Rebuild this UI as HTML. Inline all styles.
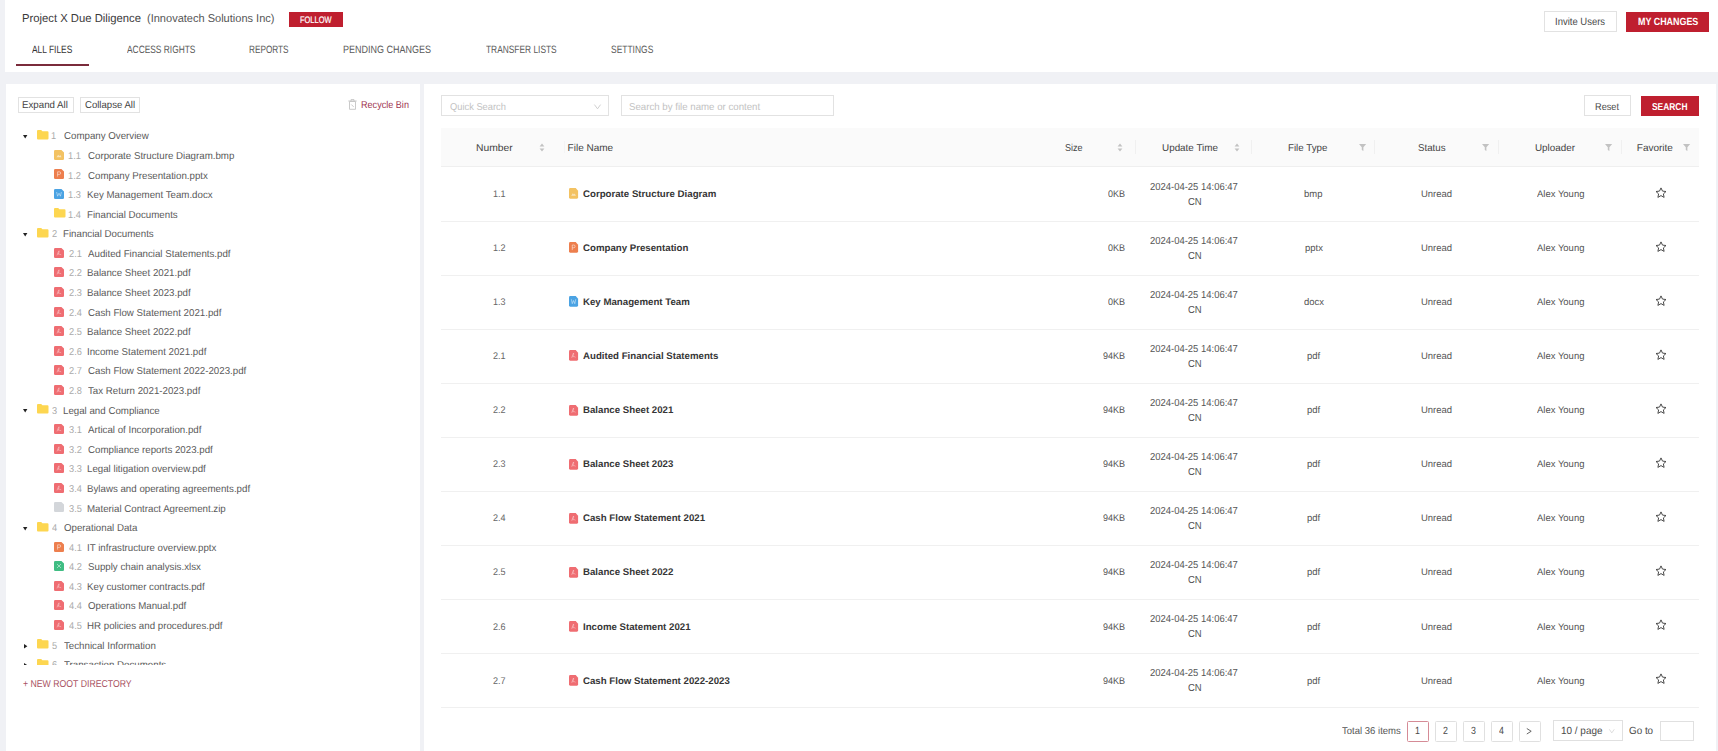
<!DOCTYPE html>
<html><head><meta charset="utf-8"><title>Project X Due Diligence</title>
<style>
html,body{margin:0;padding:0;}
body{width:1718px;height:751px;overflow:hidden;position:relative;background:#f0f1f5;font-family:"Liberation Sans",sans-serif;text-rendering:geometricPrecision;}
.t{position:absolute;line-height:1;white-space:nowrap;transform-origin:0 0;}
.b{position:absolute;}
.clip{position:absolute;overflow:hidden;}
svg.b{display:block;overflow:visible;}
</style></head><body>
<div class="b" style="left:5.00px;top:0.00px;width:1713.00px;height:72.00px;background:#fff;"></div>
<div class="b" style="left:6.00px;top:84.00px;width:414.00px;height:667.00px;background:#fff;"></div>
<div class="b" style="left:423.50px;top:84.00px;width:1292.50px;height:667.00px;background:#fff;"></div>
<div class="t" style="left:21.73px;top:13.00px;font-size:11.6px;color:#3a3a3a;transform:scaleX(0.9719);">Project X Due Diligence</div>
<div class="t" style="left:147.20px;top:14.00px;font-size:11.4px;color:#555;transform:scaleX(0.9679);">(Innovatech Solutions Inc)</div>
<div class="b" style="left:289.00px;top:11.80px;width:54.30px;height:14.90px;background:#bf1f2f;"></div>
<div class="t" style="left:300.10px;top:15.00px;font-size:9.4px;color:#fff;transform:scaleX(0.7950);-webkit-text-stroke:0.2px #fff;">FOLLOW</div>
<div class="t" style="left:32.30px;top:45.00px;font-size:10.6px;color:#333;transform:scaleX(0.7922);">ALL FILES</div>
<div class="t" style="left:127.20px;top:45.00px;font-size:10.6px;color:#5a5a5a;transform:scaleX(0.7907);">ACCESS RIGHTS</div>
<div class="t" style="left:249.02px;top:45.00px;font-size:10.6px;color:#5a5a5a;transform:scaleX(0.7760);">REPORTS</div>
<div class="t" style="left:343.05px;top:45.00px;font-size:10.6px;color:#5a5a5a;transform:scaleX(0.8500);">PENDING CHANGES</div>
<div class="t" style="left:485.70px;top:45.00px;font-size:10.6px;color:#5a5a5a;transform:scaleX(0.7899);">TRANSFER LISTS</div>
<div class="t" style="left:610.70px;top:45.00px;font-size:10.6px;color:#5a5a5a;transform:scaleX(0.7981);">SETTINGS</div>
<div class="b" style="left:16.00px;top:64.00px;width:73.00px;height:2.00px;background:#7a2b3b;"></div>
<div class="b" style="left:1543.60px;top:11.30px;width:73.10px;height:21.10px;background:#fff;border:1px solid #e2e2e2;box-sizing:border-box;"></div>
<div class="t" style="left:1554.59px;top:18.00px;font-size:10.4px;color:#4a4a4a;transform:scaleX(0.9130);">Invite Users</div>
<div class="b" style="left:1626.00px;top:11.90px;width:82.90px;height:19.90px;background:#bf1f2f;"></div>
<div class="t" style="left:1637.90px;top:18.00px;font-size:10.4px;color:#fff;font-weight:700;transform:scaleX(0.8586);">MY CHANGES</div>
<div class="b" style="left:17.50px;top:96.50px;width:56.20px;height:16.20px;border:1px solid #e2e2e2;box-sizing:border-box;"></div>
<div class="t" style="left:22.33px;top:101.00px;font-size:10px;color:#444;transform:scaleX(0.9717);">Expand All</div>
<div class="b" style="left:80.10px;top:96.50px;width:60.40px;height:16.20px;border:1px solid #e2e2e2;box-sizing:border-box;"></div>
<div class="t" style="left:85.40px;top:101.00px;font-size:10px;color:#444;transform:scaleX(0.9577);">Collapse All</div>
<svg class="b" style="left:348px;top:99px" width="9" height="11" viewBox="0 0 9 11"><path d="M1.5 2.5h6v7.8h-6z M0.3 2h8.4 M3 2V0.6h3V2 M3.3 5.5l2.4 2.4" fill="none" stroke="#c4c4c4" stroke-width="0.9"/></svg>
<div class="t" style="left:360.79px;top:101.00px;font-size:10px;color:#a03550;transform:scaleX(0.9077);">Recycle Bin</div>
<div class="clip" style="left:6px;top:120px;width:414px;height:544.6px;">
<div class="b" style="left:-6px;top:-120px;width:1718px;height:751px;">
<svg class="b" style="left:23.4px;top:135.10px" width="4.4" height="3.6" viewBox="0 0 4.4 3.6"><path d="M0 0H4.4L2.2 3.4Z" fill="#222"/></svg>
<svg class="b" style="left:36.60px;top:129.90px" width="11.5" height="9.5" viewBox="0 0 11.5 9.5"><path d="M0 1Q0 0 1 0H4.2L5.4 1.3H10.5Q11.5 1.3 11.5 2.3V8.5Q11.5 9.5 10.5 9.5H1Q0 9.5 0 8.5Z" fill="#fdd650"/></svg>
<div class="t" style="left:51.38px;top:132.00px;font-size:10px;color:#aaa;transform:scaleX(0.9231);">1</div>
<div class="t" style="left:64.00px;top:132.00px;font-size:10px;color:#5a5a5a;transform:scaleX(0.9715);">Company Overview</div>
<svg class="b" style="left:54.20px;top:149.88px" width="10" height="10" viewBox="0 0 10 10" preserveAspectRatio="none"><path d="M1.3 0H7.4L10 2.6V8.7Q10 10 8.7 10H1.3Q0 10 0 8.7V1.3Q0 0 1.3 0Z" fill="#f3c262"/><path d="M2.4 7.2L4.2 4.8L5.4 6.1L6.3 5.1L7.6 7.2Z" fill="#fff" opacity="0.55"/></svg>
<div class="t" style="left:67.88px;top:152.00px;font-size:10px;color:#aaa;transform:scaleX(0.9231);">1.1</div>
<div class="t" style="left:87.90px;top:152.00px;font-size:10px;color:#5a5a5a;transform:scaleX(0.9715);">Corporate Structure Diagram.bmp</div>
<svg class="b" style="left:54.20px;top:169.47px" width="10" height="10" viewBox="0 0 10 10" preserveAspectRatio="none"><path d="M1.3 0H7.4L10 2.6V8.7Q10 10 8.7 10H1.3Q0 10 0 8.7V1.3Q0 0 1.3 0Z" fill="#ed7f4e"/><path d="M3.6 7.6V2.8H5.3Q6.7 2.8 6.7 4.1Q6.7 5.4 5.3 5.4H3.6" fill="none" stroke="#fff" stroke-width="0.9" opacity="0.55"/></svg>
<div class="t" style="left:67.88px;top:172.00px;font-size:10px;color:#aaa;transform:scaleX(0.9231);">1.2</div>
<div class="t" style="left:87.90px;top:172.00px;font-size:10px;color:#5a5a5a;transform:scaleX(0.9715);">Company Presentation.pptx</div>
<svg class="b" style="left:54.20px;top:189.05px" width="10" height="10" viewBox="0 0 10 10" preserveAspectRatio="none"><path d="M1.3 0H7.4L10 2.6V8.7Q10 10 8.7 10H1.3Q0 10 0 8.7V1.3Q0 0 1.3 0Z" fill="#4ba3e3"/><path d="M2.6 3L3.6 7.2L5 4.2L6.4 7.2L7.4 3" fill="none" stroke="#fff" stroke-width="0.8" opacity="0.55"/></svg>
<div class="t" style="left:67.88px;top:191.00px;font-size:10px;color:#aaa;transform:scaleX(0.9231);">1.3</div>
<div class="t" style="left:86.93px;top:191.00px;font-size:10px;color:#5a5a5a;transform:scaleX(0.9715);">Key Management Team.docx</div>
<svg class="b" style="left:53.60px;top:208.24px" width="11.5" height="9.5" viewBox="0 0 11.5 9.5"><path d="M0 1Q0 0 1 0H4.2L5.4 1.3H10.5Q11.5 1.3 11.5 2.3V8.5Q11.5 9.5 10.5 9.5H1Q0 9.5 0 8.5Z" fill="#fdd650"/></svg>
<div class="t" style="left:67.88px;top:211.00px;font-size:10px;color:#aaa;transform:scaleX(0.9231);">1.4</div>
<div class="t" style="left:86.93px;top:211.00px;font-size:10px;color:#5a5a5a;transform:scaleX(0.9715);">Financial Documents</div>
<svg class="b" style="left:23.4px;top:233.03px" width="4.4" height="3.6" viewBox="0 0 4.4 3.6"><path d="M0 0H4.4L2.2 3.4Z" fill="#222"/></svg>
<svg class="b" style="left:36.60px;top:227.82px" width="11.5" height="9.5" viewBox="0 0 11.5 9.5"><path d="M0 1Q0 0 1 0H4.2L5.4 1.3H10.5Q11.5 1.3 11.5 2.3V8.5Q11.5 9.5 10.5 9.5H1Q0 9.5 0 8.5Z" fill="#fdd650"/></svg>
<div class="t" style="left:52.30px;top:230.00px;font-size:10px;color:#aaa;transform:scaleX(0.9231);">2</div>
<div class="t" style="left:63.03px;top:230.00px;font-size:10px;color:#5a5a5a;transform:scaleX(0.9715);">Financial Documents</div>
<svg class="b" style="left:54.20px;top:247.81px" width="10" height="10" viewBox="0 0 10 10" preserveAspectRatio="none"><path d="M1.3 0H7.4L10 2.6V8.7Q10 10 8.7 10H1.3Q0 10 0 8.7V1.3Q0 0 1.3 0Z" fill="#ef6d72"/><path d="M3 7.4Q4.4 3.2 5 2.8Q5.6 3.6 4.2 6.2Q6 6 7.2 6.8" fill="none" stroke="#fff" stroke-width="0.7" opacity="0.5"/></svg>
<div class="t" style="left:68.80px;top:250.00px;font-size:10px;color:#aaa;transform:scaleX(0.9231);">2.1</div>
<div class="t" style="left:87.90px;top:250.00px;font-size:10px;color:#5a5a5a;transform:scaleX(0.9715);">Audited Financial Statements.pdf</div>
<svg class="b" style="left:54.20px;top:267.39px" width="10" height="10" viewBox="0 0 10 10" preserveAspectRatio="none"><path d="M1.3 0H7.4L10 2.6V8.7Q10 10 8.7 10H1.3Q0 10 0 8.7V1.3Q0 0 1.3 0Z" fill="#ef6d72"/><path d="M3 7.4Q4.4 3.2 5 2.8Q5.6 3.6 4.2 6.2Q6 6 7.2 6.8" fill="none" stroke="#fff" stroke-width="0.7" opacity="0.5"/></svg>
<div class="t" style="left:68.80px;top:269.00px;font-size:10px;color:#aaa;transform:scaleX(0.9231);">2.2</div>
<div class="t" style="left:86.93px;top:269.00px;font-size:10px;color:#5a5a5a;transform:scaleX(0.9715);">Balance Sheet 2021.pdf</div>
<svg class="b" style="left:54.20px;top:286.98px" width="10" height="10" viewBox="0 0 10 10" preserveAspectRatio="none"><path d="M1.3 0H7.4L10 2.6V8.7Q10 10 8.7 10H1.3Q0 10 0 8.7V1.3Q0 0 1.3 0Z" fill="#ef6d72"/><path d="M3 7.4Q4.4 3.2 5 2.8Q5.6 3.6 4.2 6.2Q6 6 7.2 6.8" fill="none" stroke="#fff" stroke-width="0.7" opacity="0.5"/></svg>
<div class="t" style="left:68.80px;top:289.00px;font-size:10px;color:#aaa;transform:scaleX(0.9231);">2.3</div>
<div class="t" style="left:86.93px;top:289.00px;font-size:10px;color:#5a5a5a;transform:scaleX(0.9715);">Balance Sheet 2023.pdf</div>
<svg class="b" style="left:54.20px;top:306.57px" width="10" height="10" viewBox="0 0 10 10" preserveAspectRatio="none"><path d="M1.3 0H7.4L10 2.6V8.7Q10 10 8.7 10H1.3Q0 10 0 8.7V1.3Q0 0 1.3 0Z" fill="#ef6d72"/><path d="M3 7.4Q4.4 3.2 5 2.8Q5.6 3.6 4.2 6.2Q6 6 7.2 6.8" fill="none" stroke="#fff" stroke-width="0.7" opacity="0.5"/></svg>
<div class="t" style="left:68.80px;top:309.00px;font-size:10px;color:#aaa;transform:scaleX(0.9231);">2.4</div>
<div class="t" style="left:87.90px;top:309.00px;font-size:10px;color:#5a5a5a;transform:scaleX(0.9715);">Cash Flow Statement 2021.pdf</div>
<svg class="b" style="left:54.20px;top:326.15px" width="10" height="10" viewBox="0 0 10 10" preserveAspectRatio="none"><path d="M1.3 0H7.4L10 2.6V8.7Q10 10 8.7 10H1.3Q0 10 0 8.7V1.3Q0 0 1.3 0Z" fill="#ef6d72"/><path d="M3 7.4Q4.4 3.2 5 2.8Q5.6 3.6 4.2 6.2Q6 6 7.2 6.8" fill="none" stroke="#fff" stroke-width="0.7" opacity="0.5"/></svg>
<div class="t" style="left:68.80px;top:328.00px;font-size:10px;color:#aaa;transform:scaleX(0.9231);">2.5</div>
<div class="t" style="left:86.93px;top:328.00px;font-size:10px;color:#5a5a5a;transform:scaleX(0.9715);">Balance Sheet 2022.pdf</div>
<svg class="b" style="left:54.20px;top:345.74px" width="10" height="10" viewBox="0 0 10 10" preserveAspectRatio="none"><path d="M1.3 0H7.4L10 2.6V8.7Q10 10 8.7 10H1.3Q0 10 0 8.7V1.3Q0 0 1.3 0Z" fill="#ef6d72"/><path d="M3 7.4Q4.4 3.2 5 2.8Q5.6 3.6 4.2 6.2Q6 6 7.2 6.8" fill="none" stroke="#fff" stroke-width="0.7" opacity="0.5"/></svg>
<div class="t" style="left:68.80px;top:348.00px;font-size:10px;color:#aaa;transform:scaleX(0.9231);">2.6</div>
<div class="t" style="left:86.93px;top:348.00px;font-size:10px;color:#5a5a5a;transform:scaleX(0.9715);">Income Statement 2021.pdf</div>
<svg class="b" style="left:54.20px;top:365.32px" width="10" height="10" viewBox="0 0 10 10" preserveAspectRatio="none"><path d="M1.3 0H7.4L10 2.6V8.7Q10 10 8.7 10H1.3Q0 10 0 8.7V1.3Q0 0 1.3 0Z" fill="#ef6d72"/><path d="M3 7.4Q4.4 3.2 5 2.8Q5.6 3.6 4.2 6.2Q6 6 7.2 6.8" fill="none" stroke="#fff" stroke-width="0.7" opacity="0.5"/></svg>
<div class="t" style="left:68.80px;top:367.00px;font-size:10px;color:#aaa;transform:scaleX(0.9231);">2.7</div>
<div class="t" style="left:87.90px;top:367.00px;font-size:10px;color:#5a5a5a;transform:scaleX(0.9715);">Cash Flow Statement 2022-2023.pdf</div>
<svg class="b" style="left:54.20px;top:384.91px" width="10" height="10" viewBox="0 0 10 10" preserveAspectRatio="none"><path d="M1.3 0H7.4L10 2.6V8.7Q10 10 8.7 10H1.3Q0 10 0 8.7V1.3Q0 0 1.3 0Z" fill="#ef6d72"/><path d="M3 7.4Q4.4 3.2 5 2.8Q5.6 3.6 4.2 6.2Q6 6 7.2 6.8" fill="none" stroke="#fff" stroke-width="0.7" opacity="0.5"/></svg>
<div class="t" style="left:68.80px;top:387.00px;font-size:10px;color:#aaa;transform:scaleX(0.9231);">2.8</div>
<div class="t" style="left:87.90px;top:387.00px;font-size:10px;color:#5a5a5a;transform:scaleX(0.9715);">Tax Return 2021-2023.pdf</div>
<svg class="b" style="left:23.4px;top:409.29px" width="4.4" height="3.6" viewBox="0 0 4.4 3.6"><path d="M0 0H4.4L2.2 3.4Z" fill="#222"/></svg>
<svg class="b" style="left:36.60px;top:404.09px" width="11.5" height="9.5" viewBox="0 0 11.5 9.5"><path d="M0 1Q0 0 1 0H4.2L5.4 1.3H10.5Q11.5 1.3 11.5 2.3V8.5Q11.5 9.5 10.5 9.5H1Q0 9.5 0 8.5Z" fill="#fdd650"/></svg>
<div class="t" style="left:52.30px;top:407.00px;font-size:10px;color:#aaa;transform:scaleX(0.9231);">3</div>
<div class="t" style="left:63.03px;top:407.00px;font-size:10px;color:#5a5a5a;transform:scaleX(0.9715);">Legal and Compliance</div>
<svg class="b" style="left:54.20px;top:424.08px" width="10" height="10" viewBox="0 0 10 10" preserveAspectRatio="none"><path d="M1.3 0H7.4L10 2.6V8.7Q10 10 8.7 10H1.3Q0 10 0 8.7V1.3Q0 0 1.3 0Z" fill="#ef6d72"/><path d="M3 7.4Q4.4 3.2 5 2.8Q5.6 3.6 4.2 6.2Q6 6 7.2 6.8" fill="none" stroke="#fff" stroke-width="0.7" opacity="0.5"/></svg>
<div class="t" style="left:68.80px;top:426.00px;font-size:10px;color:#aaa;transform:scaleX(0.9231);">3.1</div>
<div class="t" style="left:87.90px;top:426.00px;font-size:10px;color:#5a5a5a;transform:scaleX(0.9715);">Artical of Incorporation.pdf</div>
<svg class="b" style="left:54.20px;top:443.66px" width="10" height="10" viewBox="0 0 10 10" preserveAspectRatio="none"><path d="M1.3 0H7.4L10 2.6V8.7Q10 10 8.7 10H1.3Q0 10 0 8.7V1.3Q0 0 1.3 0Z" fill="#ef6d72"/><path d="M3 7.4Q4.4 3.2 5 2.8Q5.6 3.6 4.2 6.2Q6 6 7.2 6.8" fill="none" stroke="#fff" stroke-width="0.7" opacity="0.5"/></svg>
<div class="t" style="left:68.80px;top:446.00px;font-size:10px;color:#aaa;transform:scaleX(0.9231);">3.2</div>
<div class="t" style="left:87.90px;top:446.00px;font-size:10px;color:#5a5a5a;transform:scaleX(0.9715);">Compliance reports 2023.pdf</div>
<svg class="b" style="left:54.20px;top:463.25px" width="10" height="10" viewBox="0 0 10 10" preserveAspectRatio="none"><path d="M1.3 0H7.4L10 2.6V8.7Q10 10 8.7 10H1.3Q0 10 0 8.7V1.3Q0 0 1.3 0Z" fill="#ef6d72"/><path d="M3 7.4Q4.4 3.2 5 2.8Q5.6 3.6 4.2 6.2Q6 6 7.2 6.8" fill="none" stroke="#fff" stroke-width="0.7" opacity="0.5"/></svg>
<div class="t" style="left:68.80px;top:465.00px;font-size:10px;color:#aaa;transform:scaleX(0.9231);">3.3</div>
<div class="t" style="left:86.93px;top:465.00px;font-size:10px;color:#5a5a5a;transform:scaleX(0.9715);">Legal litigation overview.pdf</div>
<svg class="b" style="left:54.20px;top:482.83px" width="10" height="10" viewBox="0 0 10 10" preserveAspectRatio="none"><path d="M1.3 0H7.4L10 2.6V8.7Q10 10 8.7 10H1.3Q0 10 0 8.7V1.3Q0 0 1.3 0Z" fill="#ef6d72"/><path d="M3 7.4Q4.4 3.2 5 2.8Q5.6 3.6 4.2 6.2Q6 6 7.2 6.8" fill="none" stroke="#fff" stroke-width="0.7" opacity="0.5"/></svg>
<div class="t" style="left:68.80px;top:485.00px;font-size:10px;color:#aaa;transform:scaleX(0.9231);">3.4</div>
<div class="t" style="left:86.93px;top:485.00px;font-size:10px;color:#5a5a5a;transform:scaleX(0.9715);">Bylaws and operating agreements.pdf</div>
<svg class="b" style="left:54.20px;top:502.42px" width="10" height="10" viewBox="0 0 10 10" preserveAspectRatio="none"><path d="M1.3 0H7.4L10 2.6V8.7Q10 10 8.7 10H1.3Q0 10 0 8.7V1.3Q0 0 1.3 0Z" fill="#d3d6da"/></svg>
<div class="t" style="left:68.80px;top:505.00px;font-size:10px;color:#aaa;transform:scaleX(0.9231);">3.5</div>
<div class="t" style="left:86.93px;top:505.00px;font-size:10px;color:#5a5a5a;transform:scaleX(0.9715);">Material Contract Agreement.zip</div>
<svg class="b" style="left:23.4px;top:526.80px" width="4.4" height="3.6" viewBox="0 0 4.4 3.6"><path d="M0 0H4.4L2.2 3.4Z" fill="#222"/></svg>
<svg class="b" style="left:36.60px;top:521.60px" width="11.5" height="9.5" viewBox="0 0 11.5 9.5"><path d="M0 1Q0 0 1 0H4.2L5.4 1.3H10.5Q11.5 1.3 11.5 2.3V8.5Q11.5 9.5 10.5 9.5H1Q0 9.5 0 8.5Z" fill="#fdd650"/></svg>
<div class="t" style="left:52.30px;top:524.00px;font-size:10px;color:#aaa;transform:scaleX(0.9231);">4</div>
<div class="t" style="left:64.00px;top:524.00px;font-size:10px;color:#5a5a5a;transform:scaleX(0.9715);">Operational Data</div>
<svg class="b" style="left:54.20px;top:541.59px" width="10" height="10" viewBox="0 0 10 10" preserveAspectRatio="none"><path d="M1.3 0H7.4L10 2.6V8.7Q10 10 8.7 10H1.3Q0 10 0 8.7V1.3Q0 0 1.3 0Z" fill="#ed7f4e"/><path d="M3.6 7.6V2.8H5.3Q6.7 2.8 6.7 4.1Q6.7 5.4 5.3 5.4H3.6" fill="none" stroke="#fff" stroke-width="0.9" opacity="0.55"/></svg>
<div class="t" style="left:68.80px;top:544.00px;font-size:10px;color:#aaa;transform:scaleX(0.9231);">4.1</div>
<div class="t" style="left:86.93px;top:544.00px;font-size:10px;color:#5a5a5a;transform:scaleX(0.9715);">IT infrastructure overview.pptx</div>
<svg class="b" style="left:54.20px;top:561.17px" width="10" height="10" viewBox="0 0 10 10" preserveAspectRatio="none"><path d="M1.3 0H7.4L10 2.6V8.7Q10 10 8.7 10H1.3Q0 10 0 8.7V1.3Q0 0 1.3 0Z" fill="#40bd83"/><path d="M3 3L7 7M7 3L3 7" fill="none" stroke="#fff" stroke-width="0.9" opacity="0.55"/></svg>
<div class="t" style="left:68.80px;top:563.00px;font-size:10px;color:#aaa;transform:scaleX(0.9231);">4.2</div>
<div class="t" style="left:87.90px;top:563.00px;font-size:10px;color:#5a5a5a;transform:scaleX(0.9715);">Supply chain analysis.xlsx</div>
<svg class="b" style="left:54.20px;top:580.75px" width="10" height="10" viewBox="0 0 10 10" preserveAspectRatio="none"><path d="M1.3 0H7.4L10 2.6V8.7Q10 10 8.7 10H1.3Q0 10 0 8.7V1.3Q0 0 1.3 0Z" fill="#ef6d72"/><path d="M3 7.4Q4.4 3.2 5 2.8Q5.6 3.6 4.2 6.2Q6 6 7.2 6.8" fill="none" stroke="#fff" stroke-width="0.7" opacity="0.5"/></svg>
<div class="t" style="left:68.80px;top:583.00px;font-size:10px;color:#aaa;transform:scaleX(0.9231);">4.3</div>
<div class="t" style="left:86.93px;top:583.00px;font-size:10px;color:#5a5a5a;transform:scaleX(0.9715);">Key customer contracts.pdf</div>
<svg class="b" style="left:54.20px;top:600.34px" width="10" height="10" viewBox="0 0 10 10" preserveAspectRatio="none"><path d="M1.3 0H7.4L10 2.6V8.7Q10 10 8.7 10H1.3Q0 10 0 8.7V1.3Q0 0 1.3 0Z" fill="#ef6d72"/><path d="M3 7.4Q4.4 3.2 5 2.8Q5.6 3.6 4.2 6.2Q6 6 7.2 6.8" fill="none" stroke="#fff" stroke-width="0.7" opacity="0.5"/></svg>
<div class="t" style="left:68.80px;top:602.00px;font-size:10px;color:#aaa;transform:scaleX(0.9231);">4.4</div>
<div class="t" style="left:87.90px;top:602.00px;font-size:10px;color:#5a5a5a;transform:scaleX(0.9715);">Operations Manual.pdf</div>
<svg class="b" style="left:54.20px;top:619.93px" width="10" height="10" viewBox="0 0 10 10" preserveAspectRatio="none"><path d="M1.3 0H7.4L10 2.6V8.7Q10 10 8.7 10H1.3Q0 10 0 8.7V1.3Q0 0 1.3 0Z" fill="#ef6d72"/><path d="M3 7.4Q4.4 3.2 5 2.8Q5.6 3.6 4.2 6.2Q6 6 7.2 6.8" fill="none" stroke="#fff" stroke-width="0.7" opacity="0.5"/></svg>
<div class="t" style="left:68.80px;top:622.00px;font-size:10px;color:#aaa;transform:scaleX(0.9231);">4.5</div>
<div class="t" style="left:86.93px;top:622.00px;font-size:10px;color:#5a5a5a;transform:scaleX(0.9715);">HR policies and procedures.pdf</div>
<svg class="b" style="left:24.2px;top:643.51px" width="3.6" height="4.4" viewBox="0 0 3.6 4.4"><path d="M0 0V4.4L3.4 2.2Z" fill="#222"/></svg>
<svg class="b" style="left:36.60px;top:639.11px" width="11.5" height="9.5" viewBox="0 0 11.5 9.5"><path d="M0 1Q0 0 1 0H4.2L5.4 1.3H10.5Q11.5 1.3 11.5 2.3V8.5Q11.5 9.5 10.5 9.5H1Q0 9.5 0 8.5Z" fill="#fdd650"/></svg>
<div class="t" style="left:52.30px;top:642.00px;font-size:10px;color:#aaa;transform:scaleX(0.9231);">5</div>
<div class="t" style="left:64.00px;top:642.00px;font-size:10px;color:#5a5a5a;transform:scaleX(0.9715);">Technical Information</div>
<svg class="b" style="left:24.2px;top:663.10px" width="3.6" height="4.4" viewBox="0 0 3.6 4.4"><path d="M0 0V4.4L3.4 2.2Z" fill="#222"/></svg>
<svg class="b" style="left:36.60px;top:658.70px" width="11.5" height="9.5" viewBox="0 0 11.5 9.5"><path d="M0 1Q0 0 1 0H4.2L5.4 1.3H10.5Q11.5 1.3 11.5 2.3V8.5Q11.5 9.5 10.5 9.5H1Q0 9.5 0 8.5Z" fill="#fdd650"/></svg>
<div class="t" style="left:52.30px;top:661.00px;font-size:10px;color:#aaa;transform:scaleX(0.9231);">6</div>
<div class="t" style="left:64.00px;top:661.00px;font-size:10px;color:#5a5a5a;transform:scaleX(0.9715);">Transaction Documents</div>
</div></div>
<div class="t" style="left:22.60px;top:680.00px;font-size:10px;color:#a95362;transform:scaleX(0.8712);">+ NEW ROOT DIRECTORY</div>
<div class="b" style="left:441.20px;top:95.00px;width:167.40px;height:21.30px;border:1px solid #e2e2e2;box-sizing:border-box;"></div>
<div class="t" style="left:449.90px;top:103.00px;font-size:10px;color:#c2c2c2;transform:scaleX(0.9317);">Quick Search</div>
<svg class="b" style="left:594px;top:104px" width="7" height="5.5" viewBox="0 0 7 5.5"><path d="M0.4 0.6L3.5 4.8L6.6 0.6" fill="none" stroke="#c4c4c4" stroke-width="0.8"/></svg>
<div class="b" style="left:620.50px;top:95.30px;width:213.10px;height:21.20px;border:1px solid #e2e2e2;box-sizing:border-box;"></div>
<div class="t" style="left:628.80px;top:103.00px;font-size:10px;color:#c2c2c2;transform:scaleX(0.9669);">Search by file name or content</div>
<div class="b" style="left:1584.00px;top:95.20px;width:47.30px;height:21.10px;border:1px solid #e2e2e2;box-sizing:border-box;"></div>
<div class="t" style="left:1595.48px;top:103.00px;font-size:10px;color:#4a4a4a;transform:scaleX(0.9200);">Reset</div>
<div class="b" style="left:1640.80px;top:96.00px;width:58.20px;height:20.00px;background:#bf1f2f;"></div>
<div class="t" style="left:1651.70px;top:103.00px;font-size:10px;color:#fff;font-weight:700;transform:scaleX(0.8405);">SEARCH</div>
<div class="b" style="left:441.00px;top:128.40px;width:1257.50px;height:38.60px;background:#fafafa;"></div>
<div class="b" style="left:441.00px;top:166.20px;width:1257.50px;height:1.00px;background:#efefef;"></div>
<div class="b" style="left:1135.10px;top:140.00px;width:1.00px;height:14.00px;background:#f0f0f0;"></div>
<div class="b" style="left:1250.90px;top:140.00px;width:1.00px;height:14.00px;background:#f0f0f0;"></div>
<div class="b" style="left:1374.30px;top:140.00px;width:1.00px;height:14.00px;background:#f0f0f0;"></div>
<div class="b" style="left:1497.50px;top:140.00px;width:1.00px;height:14.00px;background:#f0f0f0;"></div>
<div class="b" style="left:1621.30px;top:140.00px;width:1.00px;height:14.00px;background:#f0f0f0;"></div>
<div class="b" style="left:564.10px;top:141.00px;width:1.00px;height:12.00px;background:#f4f4f4;"></div>
<div class="t" style="left:476.27px;top:144.00px;font-size:10px;color:#444;transform:scaleX(1.0314);">Number</div>
<svg class="b" style="left:538.60px;top:142px" width="6" height="11" viewBox="0 0 6 11"><path d="M0.6 4.6L3 1.6L5.4 4.6Z M0.6 6.4L3 9.4L5.4 6.4Z" fill="#c2c2c2"/></svg>
<div class="t" style="left:567.60px;top:144.00px;font-size:10px;color:#444;">File Name</div>
<div class="t" style="left:1065.30px;top:144.00px;font-size:10px;color:#444;transform:scaleX(0.9053);">Size</div>
<svg class="b" style="left:1117.00px;top:142px" width="6" height="11" viewBox="0 0 6 11"><path d="M0.6 4.6L3 1.6L5.4 4.6Z M0.6 6.4L3 9.4L5.4 6.4Z" fill="#c2c2c2"/></svg>
<div class="t" style="left:1161.70px;top:144.00px;font-size:10px;color:#444;transform:scaleX(0.9877);">Update Time</div>
<svg class="b" style="left:1233.50px;top:142px" width="6" height="11" viewBox="0 0 6 11"><path d="M0.6 4.6L3 1.6L5.4 4.6Z M0.6 6.4L3 9.4L5.4 6.4Z" fill="#c2c2c2"/></svg>
<div class="t" style="left:1288.03px;top:144.00px;font-size:10px;color:#444;transform:scaleX(0.9744);">File Type</div>
<svg class="b" style="left:1359.40px;top:144px" width="7.2" height="7" viewBox="0 0 7.2 7"><path d="M0 0H7.2L4.4 3.2V7L2.8 5.9V3.2Z" fill="#c2c2c2"/></svg>
<div class="t" style="left:1417.70px;top:144.00px;font-size:10px;color:#444;transform:scaleX(0.9714);">Status</div>
<svg class="b" style="left:1482.10px;top:144px" width="7.2" height="7" viewBox="0 0 7.2 7"><path d="M0 0H7.2L4.4 3.2V7L2.8 5.9V3.2Z" fill="#c2c2c2"/></svg>
<div class="t" style="left:1534.60px;top:144.00px;font-size:10px;color:#444;transform:scaleX(0.9854);">Uploader</div>
<svg class="b" style="left:1605.40px;top:144px" width="7.2" height="7" viewBox="0 0 7.2 7"><path d="M0 0H7.2L4.4 3.2V7L2.8 5.9V3.2Z" fill="#c2c2c2"/></svg>
<div class="t" style="left:1636.80px;top:144.00px;font-size:10px;color:#444;">Favorite</div>
<svg class="b" style="left:1683.20px;top:144px" width="7.2" height="7" viewBox="0 0 7.2 7"><path d="M0 0H7.2L4.4 3.2V7L2.8 5.9V3.2Z" fill="#c2c2c2"/></svg>
<div class="b" style="left:441.00px;top:220.90px;width:1257.50px;height:1.00px;background:#f0f0f0;"></div>
<div class="t" style="left:492.76px;top:190.00px;font-size:9.6px;color:#666;transform:scaleX(0.9417);">1.1</div>
<svg class="b" style="left:568.80px;top:188.30px" width="9.1" height="10.7" viewBox="0 0 10 10" preserveAspectRatio="none"><path d="M1.3 0H7.4L10 2.6V8.7Q10 10 8.7 10H1.3Q0 10 0 8.7V1.3Q0 0 1.3 0Z" fill="#f3c262"/><path d="M2.4 7.2L4.2 4.8L5.4 6.1L6.3 5.1L7.6 7.2Z" fill="#fff" opacity="0.55"/></svg>
<div class="t" style="left:582.90px;top:190.00px;font-size:9.6px;color:#363636;font-weight:700;transform:scaleX(1.0083);">Corporate Structure Diagram</div>
<div class="t" style="left:1107.85px;top:190.00px;font-size:9.6px;color:#555;transform:scaleX(0.9391);">0KB</div>
<div class="t" style="left:1149.80px;top:183.00px;font-size:10.2px;color:#555;transform:scaleX(0.9284);">2024-04-25 14:06:47</div>
<div class="t" style="left:1187.50px;top:198.00px;font-size:10.2px;color:#555;transform:scaleX(0.9284);">CN</div>
<div class="t" style="left:1304.12px;top:190.00px;font-size:9.6px;color:#555;transform:scaleX(0.9875);">bmp</div>
<div class="t" style="left:1421.39px;top:190.00px;font-size:9.6px;color:#555;transform:scaleX(0.9875);">Unread</div>
<div class="t" style="left:1536.60px;top:190.00px;font-size:9.6px;color:#555;transform:scaleX(0.9875);">Alex Young</div>
<svg class="b" style="left:1655.1px;top:186.80px" width="12" height="12" viewBox="0 0 12 12"><path d="M6 0.9L7.5 4.1L11 4.5L8.4 6.9L9.1 10.4L6 8.6L2.9 10.4L3.6 6.9L1 4.5L4.5 4.1Z" fill="none" stroke="#4a4a4a" stroke-width="1" stroke-linejoin="round"/></svg>
<div class="b" style="left:441.00px;top:274.95px;width:1257.50px;height:1.00px;background:#f0f0f0;"></div>
<div class="t" style="left:492.76px;top:244.00px;font-size:9.6px;color:#666;transform:scaleX(0.9417);">1.2</div>
<svg class="b" style="left:568.80px;top:242.35px" width="9.1" height="10.7" viewBox="0 0 10 10" preserveAspectRatio="none"><path d="M1.3 0H7.4L10 2.6V8.7Q10 10 8.7 10H1.3Q0 10 0 8.7V1.3Q0 0 1.3 0Z" fill="#ed7f4e"/><path d="M3.6 7.6V2.8H5.3Q6.7 2.8 6.7 4.1Q6.7 5.4 5.3 5.4H3.6" fill="none" stroke="#fff" stroke-width="0.9" opacity="0.55"/></svg>
<div class="t" style="left:582.90px;top:244.00px;font-size:9.6px;color:#363636;font-weight:700;transform:scaleX(1.0083);">Company Presentation</div>
<div class="t" style="left:1107.85px;top:244.00px;font-size:9.6px;color:#555;transform:scaleX(0.9391);">0KB</div>
<div class="t" style="left:1149.80px;top:237.00px;font-size:10.2px;color:#555;transform:scaleX(0.9284);">2024-04-25 14:06:47</div>
<div class="t" style="left:1187.50px;top:252.00px;font-size:10.2px;color:#555;transform:scaleX(0.9284);">CN</div>
<div class="t" style="left:1304.61px;top:244.00px;font-size:9.6px;color:#555;transform:scaleX(0.9875);">pptx</div>
<div class="t" style="left:1421.39px;top:244.00px;font-size:9.6px;color:#555;transform:scaleX(0.9875);">Unread</div>
<div class="t" style="left:1536.60px;top:244.00px;font-size:9.6px;color:#555;transform:scaleX(0.9875);">Alex Young</div>
<svg class="b" style="left:1655.1px;top:240.85px" width="12" height="12" viewBox="0 0 12 12"><path d="M6 0.9L7.5 4.1L11 4.5L8.4 6.9L9.1 10.4L6 8.6L2.9 10.4L3.6 6.9L1 4.5L4.5 4.1Z" fill="none" stroke="#4a4a4a" stroke-width="1" stroke-linejoin="round"/></svg>
<div class="b" style="left:441.00px;top:329.00px;width:1257.50px;height:1.00px;background:#f0f0f0;"></div>
<div class="t" style="left:492.76px;top:298.00px;font-size:9.6px;color:#666;transform:scaleX(0.9417);">1.3</div>
<svg class="b" style="left:568.80px;top:296.40px" width="9.1" height="10.7" viewBox="0 0 10 10" preserveAspectRatio="none"><path d="M1.3 0H7.4L10 2.6V8.7Q10 10 8.7 10H1.3Q0 10 0 8.7V1.3Q0 0 1.3 0Z" fill="#4ba3e3"/><path d="M2.6 3L3.6 7.2L5 4.2L6.4 7.2L7.4 3" fill="none" stroke="#fff" stroke-width="0.8" opacity="0.55"/></svg>
<div class="t" style="left:582.90px;top:298.00px;font-size:9.6px;color:#363636;font-weight:700;transform:scaleX(1.0083);">Key Management Team</div>
<div class="t" style="left:1107.85px;top:298.00px;font-size:9.6px;color:#555;transform:scaleX(0.9391);">0KB</div>
<div class="t" style="left:1149.80px;top:291.00px;font-size:10.2px;color:#555;transform:scaleX(0.9284);">2024-04-25 14:06:47</div>
<div class="t" style="left:1187.50px;top:306.00px;font-size:10.2px;color:#555;transform:scaleX(0.9284);">CN</div>
<div class="t" style="left:1303.62px;top:298.00px;font-size:9.6px;color:#555;transform:scaleX(0.9875);">docx</div>
<div class="t" style="left:1421.39px;top:298.00px;font-size:9.6px;color:#555;transform:scaleX(0.9875);">Unread</div>
<div class="t" style="left:1536.60px;top:298.00px;font-size:9.6px;color:#555;transform:scaleX(0.9875);">Alex Young</div>
<svg class="b" style="left:1655.1px;top:294.90px" width="12" height="12" viewBox="0 0 12 12"><path d="M6 0.9L7.5 4.1L11 4.5L8.4 6.9L9.1 10.4L6 8.6L2.9 10.4L3.6 6.9L1 4.5L4.5 4.1Z" fill="none" stroke="#4a4a4a" stroke-width="1" stroke-linejoin="round"/></svg>
<div class="b" style="left:441.00px;top:383.05px;width:1257.50px;height:1.00px;background:#f0f0f0;"></div>
<div class="t" style="left:493.23px;top:352.00px;font-size:9.6px;color:#666;transform:scaleX(0.9417);">2.1</div>
<svg class="b" style="left:568.80px;top:350.45px" width="9.1" height="10.7" viewBox="0 0 10 10" preserveAspectRatio="none"><path d="M1.3 0H7.4L10 2.6V8.7Q10 10 8.7 10H1.3Q0 10 0 8.7V1.3Q0 0 1.3 0Z" fill="#ef6d72"/><path d="M3 7.4Q4.4 3.2 5 2.8Q5.6 3.6 4.2 6.2Q6 6 7.2 6.8" fill="none" stroke="#fff" stroke-width="0.7" opacity="0.5"/></svg>
<div class="t" style="left:582.90px;top:352.00px;font-size:9.6px;color:#363636;font-weight:700;transform:scaleX(1.0083);">Audited Financial Statements</div>
<div class="t" style="left:1103.15px;top:352.00px;font-size:9.6px;color:#555;transform:scaleX(0.9391);">94KB</div>
<div class="t" style="left:1149.80px;top:345.00px;font-size:10.2px;color:#555;transform:scaleX(0.9284);">2024-04-25 14:06:47</div>
<div class="t" style="left:1187.50px;top:360.00px;font-size:10.2px;color:#555;transform:scaleX(0.9284);">CN</div>
<div class="t" style="left:1306.59px;top:352.00px;font-size:9.6px;color:#555;transform:scaleX(0.9875);">pdf</div>
<div class="t" style="left:1421.39px;top:352.00px;font-size:9.6px;color:#555;transform:scaleX(0.9875);">Unread</div>
<div class="t" style="left:1536.60px;top:352.00px;font-size:9.6px;color:#555;transform:scaleX(0.9875);">Alex Young</div>
<svg class="b" style="left:1655.1px;top:348.95px" width="12" height="12" viewBox="0 0 12 12"><path d="M6 0.9L7.5 4.1L11 4.5L8.4 6.9L9.1 10.4L6 8.6L2.9 10.4L3.6 6.9L1 4.5L4.5 4.1Z" fill="none" stroke="#4a4a4a" stroke-width="1" stroke-linejoin="round"/></svg>
<div class="b" style="left:441.00px;top:437.10px;width:1257.50px;height:1.00px;background:#f0f0f0;"></div>
<div class="t" style="left:493.23px;top:406.00px;font-size:9.6px;color:#666;transform:scaleX(0.9417);">2.2</div>
<svg class="b" style="left:568.80px;top:404.50px" width="9.1" height="10.7" viewBox="0 0 10 10" preserveAspectRatio="none"><path d="M1.3 0H7.4L10 2.6V8.7Q10 10 8.7 10H1.3Q0 10 0 8.7V1.3Q0 0 1.3 0Z" fill="#ef6d72"/><path d="M3 7.4Q4.4 3.2 5 2.8Q5.6 3.6 4.2 6.2Q6 6 7.2 6.8" fill="none" stroke="#fff" stroke-width="0.7" opacity="0.5"/></svg>
<div class="t" style="left:582.90px;top:406.00px;font-size:9.6px;color:#363636;font-weight:700;transform:scaleX(1.0083);">Balance Sheet 2021</div>
<div class="t" style="left:1103.15px;top:406.00px;font-size:9.6px;color:#555;transform:scaleX(0.9391);">94KB</div>
<div class="t" style="left:1149.80px;top:399.00px;font-size:10.2px;color:#555;transform:scaleX(0.9284);">2024-04-25 14:06:47</div>
<div class="t" style="left:1187.50px;top:414.00px;font-size:10.2px;color:#555;transform:scaleX(0.9284);">CN</div>
<div class="t" style="left:1306.59px;top:406.00px;font-size:9.6px;color:#555;transform:scaleX(0.9875);">pdf</div>
<div class="t" style="left:1421.39px;top:406.00px;font-size:9.6px;color:#555;transform:scaleX(0.9875);">Unread</div>
<div class="t" style="left:1536.60px;top:406.00px;font-size:9.6px;color:#555;transform:scaleX(0.9875);">Alex Young</div>
<svg class="b" style="left:1655.1px;top:403.00px" width="12" height="12" viewBox="0 0 12 12"><path d="M6 0.9L7.5 4.1L11 4.5L8.4 6.9L9.1 10.4L6 8.6L2.9 10.4L3.6 6.9L1 4.5L4.5 4.1Z" fill="none" stroke="#4a4a4a" stroke-width="1" stroke-linejoin="round"/></svg>
<div class="b" style="left:441.00px;top:491.15px;width:1257.50px;height:1.00px;background:#f0f0f0;"></div>
<div class="t" style="left:493.23px;top:460.00px;font-size:9.6px;color:#666;transform:scaleX(0.9417);">2.3</div>
<svg class="b" style="left:568.80px;top:458.55px" width="9.1" height="10.7" viewBox="0 0 10 10" preserveAspectRatio="none"><path d="M1.3 0H7.4L10 2.6V8.7Q10 10 8.7 10H1.3Q0 10 0 8.7V1.3Q0 0 1.3 0Z" fill="#ef6d72"/><path d="M3 7.4Q4.4 3.2 5 2.8Q5.6 3.6 4.2 6.2Q6 6 7.2 6.8" fill="none" stroke="#fff" stroke-width="0.7" opacity="0.5"/></svg>
<div class="t" style="left:582.90px;top:460.00px;font-size:9.6px;color:#363636;font-weight:700;transform:scaleX(1.0083);">Balance Sheet 2023</div>
<div class="t" style="left:1103.15px;top:460.00px;font-size:9.6px;color:#555;transform:scaleX(0.9391);">94KB</div>
<div class="t" style="left:1149.80px;top:453.00px;font-size:10.2px;color:#555;transform:scaleX(0.9284);">2024-04-25 14:06:47</div>
<div class="t" style="left:1187.50px;top:468.00px;font-size:10.2px;color:#555;transform:scaleX(0.9284);">CN</div>
<div class="t" style="left:1306.59px;top:460.00px;font-size:9.6px;color:#555;transform:scaleX(0.9875);">pdf</div>
<div class="t" style="left:1421.39px;top:460.00px;font-size:9.6px;color:#555;transform:scaleX(0.9875);">Unread</div>
<div class="t" style="left:1536.60px;top:460.00px;font-size:9.6px;color:#555;transform:scaleX(0.9875);">Alex Young</div>
<svg class="b" style="left:1655.1px;top:457.05px" width="12" height="12" viewBox="0 0 12 12"><path d="M6 0.9L7.5 4.1L11 4.5L8.4 6.9L9.1 10.4L6 8.6L2.9 10.4L3.6 6.9L1 4.5L4.5 4.1Z" fill="none" stroke="#4a4a4a" stroke-width="1" stroke-linejoin="round"/></svg>
<div class="b" style="left:441.00px;top:545.20px;width:1257.50px;height:1.00px;background:#f0f0f0;"></div>
<div class="t" style="left:493.23px;top:514.00px;font-size:9.6px;color:#666;transform:scaleX(0.9417);">2.4</div>
<svg class="b" style="left:568.80px;top:512.60px" width="9.1" height="10.7" viewBox="0 0 10 10" preserveAspectRatio="none"><path d="M1.3 0H7.4L10 2.6V8.7Q10 10 8.7 10H1.3Q0 10 0 8.7V1.3Q0 0 1.3 0Z" fill="#ef6d72"/><path d="M3 7.4Q4.4 3.2 5 2.8Q5.6 3.6 4.2 6.2Q6 6 7.2 6.8" fill="none" stroke="#fff" stroke-width="0.7" opacity="0.5"/></svg>
<div class="t" style="left:582.90px;top:514.00px;font-size:9.6px;color:#363636;font-weight:700;transform:scaleX(1.0083);">Cash Flow Statement 2021</div>
<div class="t" style="left:1103.15px;top:514.00px;font-size:9.6px;color:#555;transform:scaleX(0.9391);">94KB</div>
<div class="t" style="left:1149.80px;top:507.00px;font-size:10.2px;color:#555;transform:scaleX(0.9284);">2024-04-25 14:06:47</div>
<div class="t" style="left:1187.50px;top:522.00px;font-size:10.2px;color:#555;transform:scaleX(0.9284);">CN</div>
<div class="t" style="left:1306.59px;top:514.00px;font-size:9.6px;color:#555;transform:scaleX(0.9875);">pdf</div>
<div class="t" style="left:1421.39px;top:514.00px;font-size:9.6px;color:#555;transform:scaleX(0.9875);">Unread</div>
<div class="t" style="left:1536.60px;top:514.00px;font-size:9.6px;color:#555;transform:scaleX(0.9875);">Alex Young</div>
<svg class="b" style="left:1655.1px;top:511.10px" width="12" height="12" viewBox="0 0 12 12"><path d="M6 0.9L7.5 4.1L11 4.5L8.4 6.9L9.1 10.4L6 8.6L2.9 10.4L3.6 6.9L1 4.5L4.5 4.1Z" fill="none" stroke="#4a4a4a" stroke-width="1" stroke-linejoin="round"/></svg>
<div class="b" style="left:441.00px;top:599.25px;width:1257.50px;height:1.00px;background:#f0f0f0;"></div>
<div class="t" style="left:493.23px;top:568.00px;font-size:9.6px;color:#666;transform:scaleX(0.9417);">2.5</div>
<svg class="b" style="left:568.80px;top:566.65px" width="9.1" height="10.7" viewBox="0 0 10 10" preserveAspectRatio="none"><path d="M1.3 0H7.4L10 2.6V8.7Q10 10 8.7 10H1.3Q0 10 0 8.7V1.3Q0 0 1.3 0Z" fill="#ef6d72"/><path d="M3 7.4Q4.4 3.2 5 2.8Q5.6 3.6 4.2 6.2Q6 6 7.2 6.8" fill="none" stroke="#fff" stroke-width="0.7" opacity="0.5"/></svg>
<div class="t" style="left:582.90px;top:568.00px;font-size:9.6px;color:#363636;font-weight:700;transform:scaleX(1.0083);">Balance Sheet 2022</div>
<div class="t" style="left:1103.15px;top:568.00px;font-size:9.6px;color:#555;transform:scaleX(0.9391);">94KB</div>
<div class="t" style="left:1149.80px;top:561.00px;font-size:10.2px;color:#555;transform:scaleX(0.9284);">2024-04-25 14:06:47</div>
<div class="t" style="left:1187.50px;top:576.00px;font-size:10.2px;color:#555;transform:scaleX(0.9284);">CN</div>
<div class="t" style="left:1306.59px;top:568.00px;font-size:9.6px;color:#555;transform:scaleX(0.9875);">pdf</div>
<div class="t" style="left:1421.39px;top:568.00px;font-size:9.6px;color:#555;transform:scaleX(0.9875);">Unread</div>
<div class="t" style="left:1536.60px;top:568.00px;font-size:9.6px;color:#555;transform:scaleX(0.9875);">Alex Young</div>
<svg class="b" style="left:1655.1px;top:565.15px" width="12" height="12" viewBox="0 0 12 12"><path d="M6 0.9L7.5 4.1L11 4.5L8.4 6.9L9.1 10.4L6 8.6L2.9 10.4L3.6 6.9L1 4.5L4.5 4.1Z" fill="none" stroke="#4a4a4a" stroke-width="1" stroke-linejoin="round"/></svg>
<div class="b" style="left:441.00px;top:653.30px;width:1257.50px;height:1.00px;background:#f0f0f0;"></div>
<div class="t" style="left:493.23px;top:623.00px;font-size:9.6px;color:#666;transform:scaleX(0.9417);">2.6</div>
<svg class="b" style="left:568.80px;top:620.70px" width="9.1" height="10.7" viewBox="0 0 10 10" preserveAspectRatio="none"><path d="M1.3 0H7.4L10 2.6V8.7Q10 10 8.7 10H1.3Q0 10 0 8.7V1.3Q0 0 1.3 0Z" fill="#ef6d72"/><path d="M3 7.4Q4.4 3.2 5 2.8Q5.6 3.6 4.2 6.2Q6 6 7.2 6.8" fill="none" stroke="#fff" stroke-width="0.7" opacity="0.5"/></svg>
<div class="t" style="left:582.90px;top:623.00px;font-size:9.6px;color:#363636;font-weight:700;transform:scaleX(1.0083);">Income Statement 2021</div>
<div class="t" style="left:1103.15px;top:623.00px;font-size:9.6px;color:#555;transform:scaleX(0.9391);">94KB</div>
<div class="t" style="left:1149.80px;top:615.00px;font-size:10.2px;color:#555;transform:scaleX(0.9284);">2024-04-25 14:06:47</div>
<div class="t" style="left:1187.50px;top:630.00px;font-size:10.2px;color:#555;transform:scaleX(0.9284);">CN</div>
<div class="t" style="left:1306.59px;top:623.00px;font-size:9.6px;color:#555;transform:scaleX(0.9875);">pdf</div>
<div class="t" style="left:1421.39px;top:623.00px;font-size:9.6px;color:#555;transform:scaleX(0.9875);">Unread</div>
<div class="t" style="left:1536.60px;top:623.00px;font-size:9.6px;color:#555;transform:scaleX(0.9875);">Alex Young</div>
<svg class="b" style="left:1655.1px;top:619.20px" width="12" height="12" viewBox="0 0 12 12"><path d="M6 0.9L7.5 4.1L11 4.5L8.4 6.9L9.1 10.4L6 8.6L2.9 10.4L3.6 6.9L1 4.5L4.5 4.1Z" fill="none" stroke="#4a4a4a" stroke-width="1" stroke-linejoin="round"/></svg>
<div class="b" style="left:441.00px;top:707.35px;width:1257.50px;height:1.00px;background:#f0f0f0;"></div>
<div class="t" style="left:493.23px;top:677.00px;font-size:9.6px;color:#666;transform:scaleX(0.9417);">2.7</div>
<svg class="b" style="left:568.80px;top:674.75px" width="9.1" height="10.7" viewBox="0 0 10 10" preserveAspectRatio="none"><path d="M1.3 0H7.4L10 2.6V8.7Q10 10 8.7 10H1.3Q0 10 0 8.7V1.3Q0 0 1.3 0Z" fill="#ef6d72"/><path d="M3 7.4Q4.4 3.2 5 2.8Q5.6 3.6 4.2 6.2Q6 6 7.2 6.8" fill="none" stroke="#fff" stroke-width="0.7" opacity="0.5"/></svg>
<div class="t" style="left:582.90px;top:677.00px;font-size:9.6px;color:#363636;font-weight:700;transform:scaleX(1.0083);">Cash Flow Statement 2022-2023</div>
<div class="t" style="left:1103.15px;top:677.00px;font-size:9.6px;color:#555;transform:scaleX(0.9391);">94KB</div>
<div class="t" style="left:1149.80px;top:669.00px;font-size:10.2px;color:#555;transform:scaleX(0.9284);">2024-04-25 14:06:47</div>
<div class="t" style="left:1187.50px;top:684.00px;font-size:10.2px;color:#555;transform:scaleX(0.9284);">CN</div>
<div class="t" style="left:1306.59px;top:677.00px;font-size:9.6px;color:#555;transform:scaleX(0.9875);">pdf</div>
<div class="t" style="left:1421.39px;top:677.00px;font-size:9.6px;color:#555;transform:scaleX(0.9875);">Unread</div>
<div class="t" style="left:1536.60px;top:677.00px;font-size:9.6px;color:#555;transform:scaleX(0.9875);">Alex Young</div>
<svg class="b" style="left:1655.1px;top:673.25px" width="12" height="12" viewBox="0 0 12 12"><path d="M6 0.9L7.5 4.1L11 4.5L8.4 6.9L9.1 10.4L6 8.6L2.9 10.4L3.6 6.9L1 4.5L4.5 4.1Z" fill="none" stroke="#4a4a4a" stroke-width="1" stroke-linejoin="round"/></svg>
<div class="t" style="left:1341.90px;top:727.00px;font-size:10px;color:#555;transform:scaleX(0.9532);">Total 36 items</div>
<div class="b" style="left:1407.40px;top:720.50px;width:22.10px;height:21.30px;border:1px solid #d58b96;box-sizing:border-box;border-radius:1.5px;"></div>
<div class="t" style="left:1415.43px;top:727.00px;font-size:10.4px;color:#4a4a4a;transform:scaleX(0.8500);">1</div>
<div class="b" style="left:1435.30px;top:720.50px;width:22.10px;height:21.30px;border:1px solid #e0e0e0;box-sizing:border-box;border-radius:1.5px;"></div>
<div class="t" style="left:1443.35px;top:727.00px;font-size:10.4px;color:#4a4a4a;transform:scaleX(0.8500);">2</div>
<div class="b" style="left:1463.20px;top:720.50px;width:22.10px;height:21.30px;border:1px solid #e0e0e0;box-sizing:border-box;border-radius:1.5px;"></div>
<div class="t" style="left:1471.45px;top:727.00px;font-size:10.4px;color:#4a4a4a;transform:scaleX(0.8500);">3</div>
<div class="b" style="left:1491.10px;top:720.50px;width:22.10px;height:21.30px;border:1px solid #e0e0e0;box-sizing:border-box;border-radius:1.5px;"></div>
<div class="t" style="left:1499.20px;top:727.00px;font-size:10.4px;color:#4a4a4a;transform:scaleX(0.8500);">4</div>
<div class="b" style="left:1519.00px;top:720.50px;width:22.10px;height:21.30px;border:1px solid #e0e0e0;box-sizing:border-box;border-radius:1.5px;"></div>
<svg class="b" style="left:1526.40px;top:728.2px" width="6" height="6.5" viewBox="0 0 6 6.5"><path d="M0.8 0.5L5.2 3.25L0.8 6" fill="none" stroke="#555" stroke-width="0.9"/></svg>
<div class="b" style="left:1552.90px;top:720.10px;width:69.80px;height:21.40px;border:1px solid #e0e0e0;box-sizing:border-box;"></div>
<div class="t" style="left:1560.84px;top:727.00px;font-size:10.4px;color:#4a4a4a;transform:scaleX(0.9571);">10 / page</div>
<svg class="b" style="left:1609.2px;top:728.5px" width="5.6" height="4.2" viewBox="0 0 5.6 4.2"><path d="M0.3 0.3L2.8 3.9L5.3 0.3" fill="none" stroke="#cfcfcf" stroke-width="0.7"/></svg>
<div class="t" style="left:1629.30px;top:727.00px;font-size:10.4px;color:#4a4a4a;transform:scaleX(0.9480);">Go to</div>
<div class="b" style="left:1659.50px;top:720.50px;width:34.00px;height:20.80px;border:1px solid #e0e0e0;box-sizing:border-box;"></div>
</body></html>
